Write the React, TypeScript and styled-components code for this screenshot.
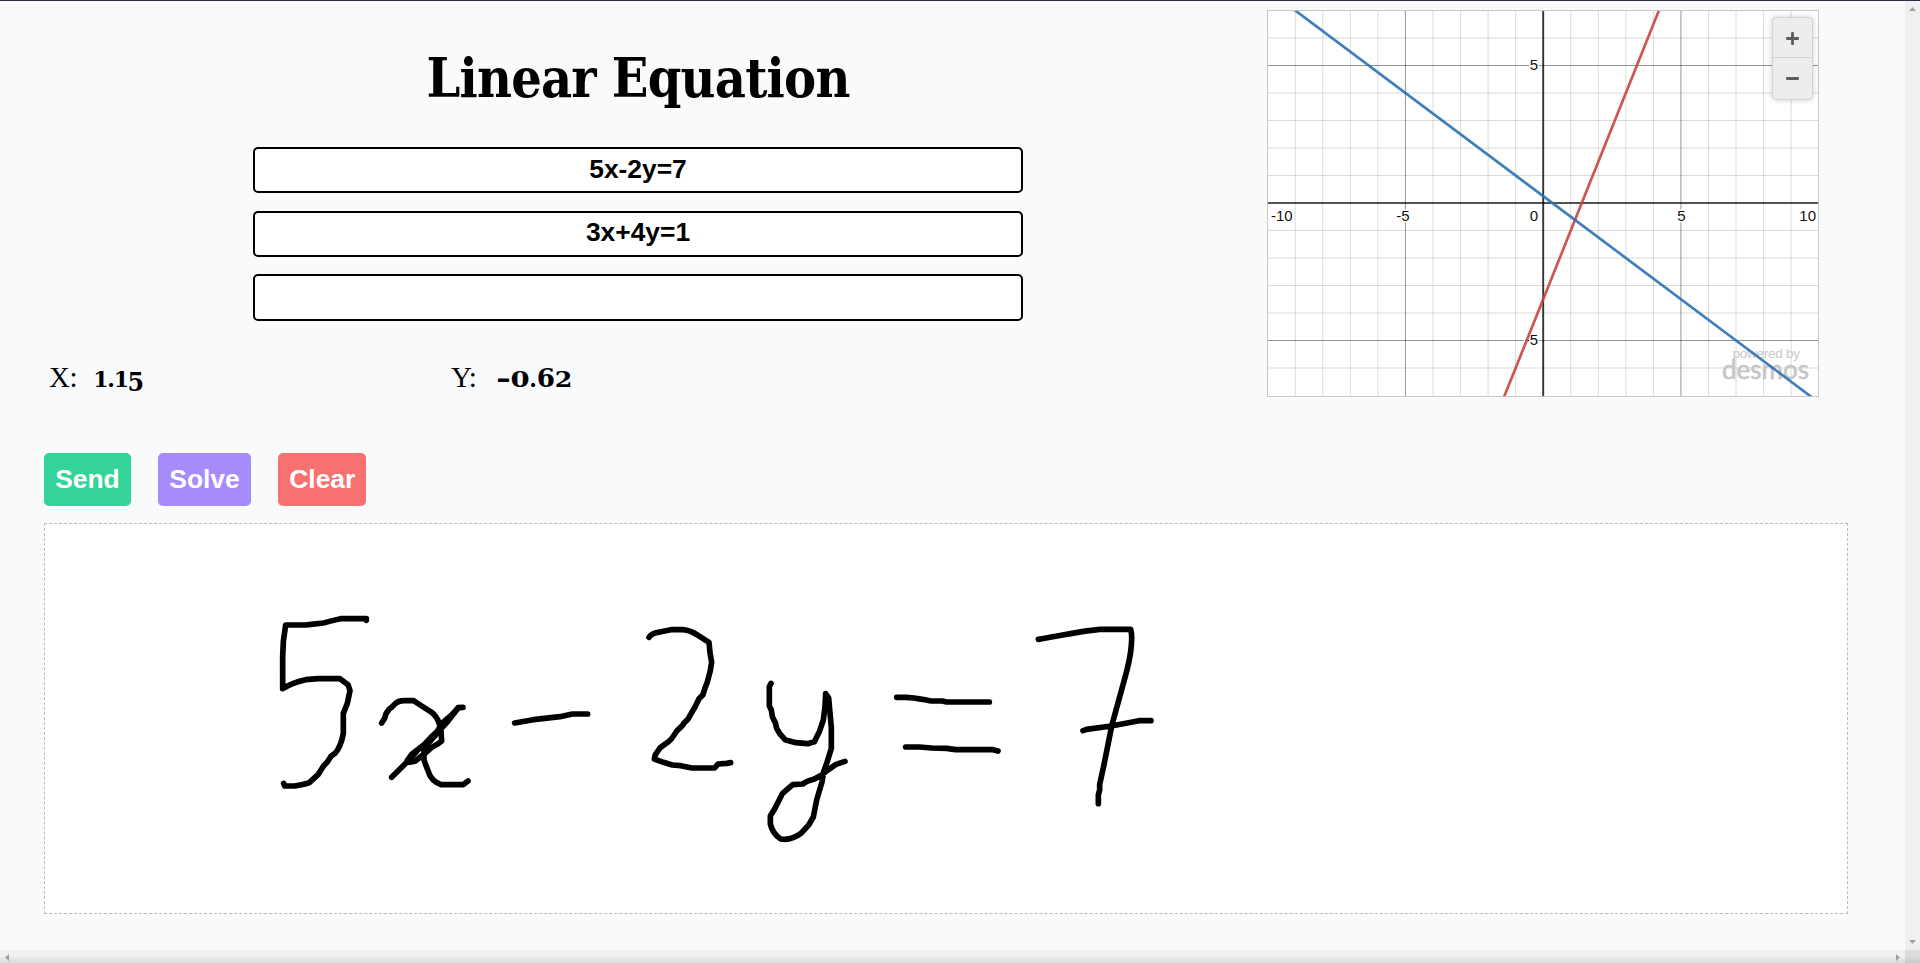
import React from "react";
import styled, { createGlobalStyle } from "styled-components";

const GlobalStyle = createGlobalStyle`
  * { box-sizing: border-box; }
  body { margin: 0; background: #f9fafc; overflow: hidden; }
`;

const Window = styled.div`
  width: 1920px;
  height: 963px;
  display: flex;
  flex-direction: column;
  border-top: 1px solid #2e2d3f;
  color: #000;
  overflow: hidden;
`;

const Viewport = styled.div`
  display: flex;
  height: 949px;
`;

const Main = styled.main`
  flex: 1;
  min-width: 0;
  padding: 9px 0 0 44px;
  background: #f9fafc;
`;

const Top = styled.section`
  display: flex;
  height: 443px;
`;

const Solver = styled.div`
  width: 1188px;
  margin-right: 35px;
  display: flex;
  flex-direction: column;
`;

const Title = styled.h1`
  margin: 32px 0 0;
  height: 105px;
  display: flex;
  justify-content: center;
  font: bold 53.5px/74px "DejaVu Serif Condensed", "DejaVu Serif", serif;
  font-stretch: condensed;
  letter-spacing: -0.8px;
  white-space: nowrap;
`;

const Equations = styled.div`
  display: flex;
  flex-direction: column;
  align-items: center;
  gap: 17.3px;
`;

const EquationBox = styled.div`
  width: 770px;
  height: 46.4px;
  padding-bottom: 3px;
  border: 2px solid #000;
  border-radius: 5px;
  background: #fff;
  display: flex;
  align-items: center;
  justify-content: center;
  font: bold 26.4px/30px "Liberation Sans", Arial, sans-serif;
`;

const Results = styled.div`
  display: flex;
  margin-top: 35px;
  padding-left: 5px;
`;

const Result = styled.div`
  width: 402px;
  height: 42px;
  display: flex;
  align-items: baseline;
  font: 29px/42px "Liberation Serif", serif;
`;

const Label = styled.span`
  width: 45.5px;
  letter-spacing: -0.5px;
`;

const Value = styled.span`
  display: flex;
  align-items: baseline;
  font-family: "DejaVu Serif", serif;
  font-weight: bold;
`;

const Digit = styled.span<{ $kind: "low" | "tall" | "deep"; $width: number; $stretch: number }>`
  display: flex;
  justify-content: center;
  width: ${(p) => p.$width}px;
  font-size: ${(p) => (p.$kind === "low" ? 22 : 26.5)}px;
  font-stretch: ${(p) => (p.$kind === "low" ? "normal" : "condensed")};
  font-family: ${(p) => (p.$kind === "low" ? '"DejaVu Serif"' : '"DejaVu Serif Condensed"')}, serif;
  position: relative;
  top: ${(p) => (p.$kind === "deep" ? 4 : 0)}px;
  transform: scaleX(${(p) => p.$stretch});
`;

const Graph = styled.div`
  position: relative;
  width: 552px;
  height: 387px;
  border: 1px solid #c8c8c8;
  background: #fff;
`;

const Plot = styled.svg`
  display: block;
  font-family: "Liberation Sans", Arial, sans-serif;
`;

const ZoomControls = styled.div`
  position: absolute;
  top: 6px;
  right: 5px;
  width: 41px;
  height: 83px;
  border: 1px solid #d4d4d4;
  border-radius: 4px;
  background: #ededed;
  box-shadow: 0 0 6px rgba(0, 0, 0, 0.18);
`;

const ZoomButton = styled.div<{ $divided?: boolean }>`
  height: ${(p) => (p.$divided ? 40 : 41)}px;
  padding-top: ${(p) => (p.$divided ? 2 : 0)}px;
  display: flex;
  align-items: center;
  justify-content: center;
  border-bottom: ${(p) => (p.$divided ? "1px solid #d2d2d2" : "none")};
`;

const Actions = styled.div`
  display: flex;
  gap: 27.2px;
  height: 70px;
`;

const Action = styled.button<{ $color: string }>`
  height: 53px;
  padding: 0 11.2px 2px;
  border: 0;
  border-radius: 5px;
  background: ${(p) => p.$color};
  color: #fff;
  font: bold 26.4px/30px "Liberation Sans", Arial, sans-serif;
`;

const Canvas = styled.div`
  width: 1804px;
  height: 391px;
  border: 1px dashed #bbb;
  background: #fff;
`;

const InkLayer = styled.svg`
  display: block;
`;

const VerticalBar = styled.div`
  width: 15px;
  padding: 6px 4px;
  background: #f0f0f0;
  display: flex;
  flex-direction: column;
  justify-content: space-between;
`;

const BottomBar = styled.div`
  height: 13px;
  display: flex;
`;

const HorizontalBar = styled.div`
  flex: 1;
  padding: 2px 5px 0;
  display: flex;
  align-items: center;
  justify-content: space-between;
  background: linear-gradient(#f1f1f1 40%, #dadada);
`;

const Corner = styled.div`
  width: 15px;
  background: linear-gradient(#dcdcdc 40%, #c9c9c9);
`;

const CX = 275.2;
const CY = 192;
const UX = 27.55;
const UY = 27.5;
const px = (x: number) => CX + x * UX;
const py = (y: number) => CY - y * UY;
const units = [-9, -8, -7, -6, -5, -4, -3, -2, -1, 1, 2, 3, 4, 5, 6, 7, 8, 9];
const rows = [-6, -5, -4, -3, -2, -1, 1, 2, 3, 4, 5, 6];
const shade = (n: number) => (n % 5 === 0 ? "rgba(0,0,0,0.42)" : "rgba(0,0,0,0.14)");

const ticks = [
  { x: 3, y: 210, t: "-10", a: "start" },
  { x: 135, y: 210, t: "-5", a: "middle" },
  { x: 270, y: 210, t: "0", a: "end" },
  { x: 413.5, y: 210, t: "5", a: "middle" },
  { x: 548, y: 210, t: "10", a: "end" },
  { x: 270, y: 59, t: "5", a: "end" },
  { x: 270, y: 334, t: "-5", a: "end" },
] as const;

function GraphPanel() {
  return (
    <Graph>
      <Plot width="550" height="385" viewBox="0 0 550 385">
        {units.map((n) => (
          <line key={n} x1={px(n)} x2={px(n)} y1="0" y2="385" stroke={shade(n)} />
        ))}
        {rows.map((n) => (
          <line key={n} x1="0" x2="550" y1={py(n)} y2={py(n)} stroke={shade(n)} />
        ))}
        <path d={`M0 ${CY}H550`} stroke="#000" strokeOpacity="0.9" strokeWidth="1.7" />
        <path d={`M${CX} 0V385`} stroke="#000" strokeOpacity="0.8" strokeWidth="1.9" />
        {ticks.map((k, i) => (
          <text key={i} x={k.x} y={k.y} textAnchor={k.a} fontSize="15"
            fill="#111" stroke="#fff" strokeWidth="3" paintOrder="stroke">{k.t}</text>
        ))}
        <text x="464.5" y="346.5" fontSize="13.5" fill="#c9c9c9" textLength="67.5">powered by</text>
        <text x="454" y="367.5" fontSize="26.5" fontFamily="Lato, sans-serif" fill="#c6c6c6"
          stroke="#c6c6c6" strokeWidth="0.6" textLength="87" lengthAdjust="spacingAndGlyphs">desmos</text>
        <g fill="none" strokeWidth="2.7" strokeOpacity="0.9">
          <path d={`M${px(-2)} ${py(-8.5)}L${px(5)} ${py(9)}`} stroke="#c74440" />
          <path d={`M${px(-10)} ${py(7.75)}L${px(10)} ${py(-7.25)}`} stroke="#2d70b3" />
        </g>
      </Plot>
      <ZoomControls>
        <ZoomButton $divided>
          <svg width="13" height="13"><path d="M1.2 6.5h10.6M6.5 1.2v10.6" stroke="#5c5c5c" strokeWidth="2.8" strokeLinecap="round" /></svg>
        </ZoomButton>
        <ZoomButton>
          <svg width="13" height="13"><path d="M1.2 6.5h10.6" stroke="#5c5c5c" strokeWidth="2.8" strokeLinecap="round" /></svg>
        </ZoomButton>
      </ZoomControls>
    </Graph>
  );
}

const digitWidths: Record<string, number> = { "-": 13, "0": 20, ".": 7.3, "6": 18, "2": 17, "1": 13, "5": 16 };
const digitStretch: Record<string, number> = { "-": 1.5, "0": 1.25, "6": 1.1, "2": 1.15 };

function NumberValue({ text }: { text: string }) {
  return (
    <Value>
      {text.split("").map((c, i) => (
        <Digit
          key={i}
          $width={digitWidths[c] ?? 16}
          $stretch={digitStretch[c] ?? 1}
          $kind={"34579".includes(c) ? "deep" : "68-".includes(c) ? "tall" : "low"}
        >
          {c}
        </Digit>
      ))}
    </Value>
  );
}

function Ink() {
  return (
    <InkLayer width="1802" height="389" fill="none" stroke="#000" strokeWidth="17" strokeLinecap="round" strokeLinejoin="round">
      <g transform="translate(195 66) scale(0.33333)">
        <path d="M379 91V86H302C280 90 267 95 250 99L213 103L197 105H137C131 137 128 170 128 200V296C146 284 170 275 197 269L235 266H300L324 284L330 302L322 340L310 370V430C306 454 299 474 286 489L273 499L262 516L251 527L234 554L208 578C193 584 177 586 164 588H134L131 580" />
        <path d="M425 399L434 385L438 371L447 358L455 352L467 340Q477 332 492 332H521L536 342L575 367Q590 379 598 401L603 425L605 453L593 462L574 473L555 490L525 514L509 517L502 511L516 492L552 464L572 443L592 424L604 402L635 375L655 353L669 352" />
        <path d="M655 353L620 398L596 424L572 452L548 478M530 484L506 511L483 534L455 562M552 490V510L557 524L570 557L580 570Q590 580 604 584H669L684 573" />
        <path d="M824 399L880 389L960 380L997 372H1043" />
      </g>
      <g transform="translate(555 76) scale(0.33333)">
        <path d="M147 112Q153 102 168 98L213 89H249Q272 91 294 106L327 127L330 158L335 187Q332 213 322 246L314 267L309 284L297 296L285 321L272 343L265 356L253 368L247 377L232 391L214 417L203 427L181 443L166 464L163 477L190 487L217 495L242 497L276 504H344L354 492L380 490L392 488" />
        <path d="M513 250L508 260V318L514 330L517 350L526 368L530 385L540 402L555 419L588 428L623 431L643 425L658 395L670 360L675 320L677 281L686 294L691 350L694 382V445L681 487L671 515L666 546L650 600L640 651L626 675L603 700Q575 722 542 717Q518 701 511 672V648L525 625L547 581L578 554L608 552L621 544L643 537L665 525L681 512L708 493L735 484" />
      </g>
      <g transform="translate(815 76) scale(0.33333)">
        <path d="M110 292H137C165 292 190 299 213 303H247L260 306H388" />
        <path d="M137 441H178L215 444L260 445L287 449H399L414 453" />
        <path d="M535 118C595 108 657 94 719 88H812Q817 105 814 135C812 178 799 218 788 258L756 374L732 494L719 553V570L715 585V611M669 392L680 388L754 378L837 362H873" />
      </g>
    </InkLayer>
  );
}

export default function App() {
  return (
    <>
      <GlobalStyle />
      <Window>
        <Viewport>
          <Main>
            <Top>
              <Solver>
                <Title>Linear Equation</Title>
                <Equations>
                  <EquationBox>5x-2y=7</EquationBox>
                  <EquationBox>3x+4y=1</EquationBox>
                  <EquationBox />
                </Equations>
                <Results>
                  <Result><Label>X:</Label><NumberValue text="1.15" /></Result>
                  <Result><Label>Y:</Label><NumberValue text="-0.62" /></Result>
                </Results>
              </Solver>
              <GraphPanel />
            </Top>
            <Actions>
              <Action $color="#34d399">Send</Action>
              <Action $color="#a78bfa">Solve</Action>
              <Action $color="#f87171">Clear</Action>
            </Actions>
            <Canvas><Ink /></Canvas>
          </Main>
          <VerticalBar>
            <svg width="7" height="4"><path d="M0 4L3.5 0L7 4Z" fill="#a0a0a0" /></svg>
            <svg width="7" height="4"><path d="M0 0L3.5 4L7 0Z" fill="#a0a0a0" /></svg>
          </VerticalBar>
        </Viewport>
        <BottomBar>
          <HorizontalBar>
            <svg width="4" height="7"><path d="M4 0L0 3.5L4 7Z" fill="#a0a0a0" /></svg>
            <svg width="4" height="7"><path d="M0 0L4 3.5L0 7Z" fill="#a0a0a0" /></svg>
          </HorizontalBar>
          <Corner />
        </BottomBar>
      </Window>
    </>
  );
}
